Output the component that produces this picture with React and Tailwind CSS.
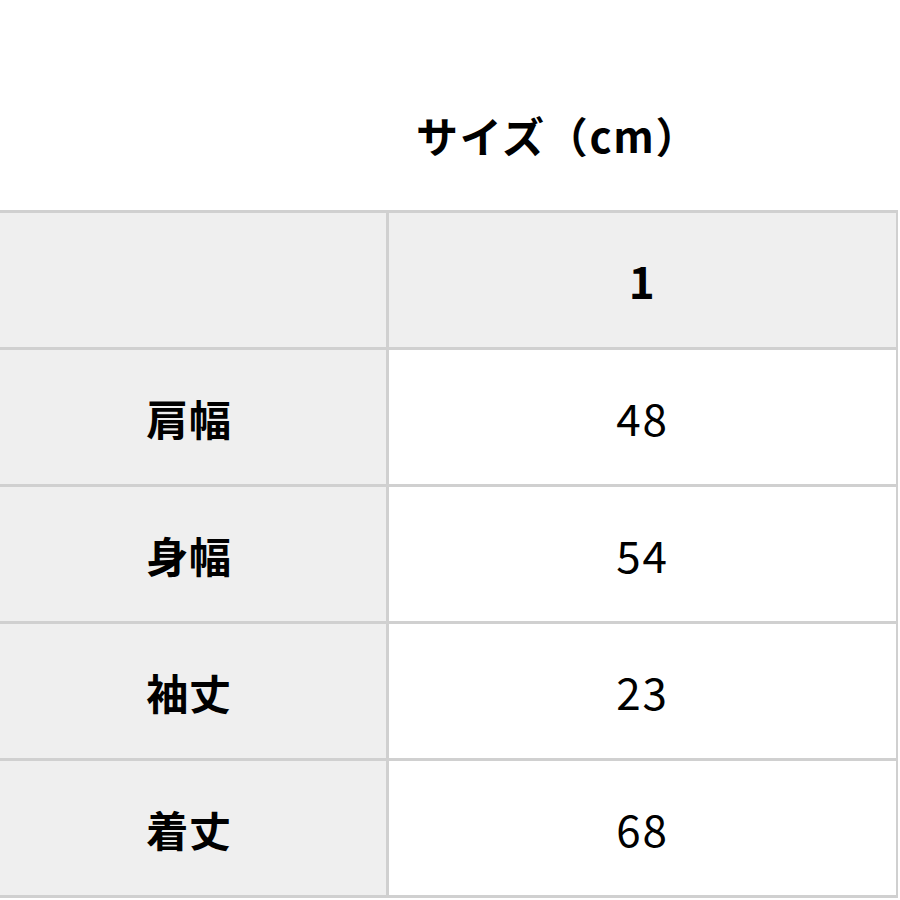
const rows = [
  { label: '', value: '1', head: true },
  { label: '肩幅', value: '48' },
  { label: '身幅', value: '54' },
  { label: '袖丈', value: '23' },
  { label: '着丈', value: '68' },
];

export default function App() {
  return (
    <div
      className="w-[900px] h-[900px] bg-white text-black overflow-hidden"
      style={{ fontFamily: '"Noto Sans CJK JP", "Noto Sans", sans-serif' }}
    >
      <div className="h-[210px] flex items-center pl-[416px] pt-[58px]">
        <h1 className="text-[42px] font-bold tracking-[0.04em]">サイズ（cm）</h1>
      </div>
      <div className="w-[898px] border-t-[3px] border-r-[2px] border-[#d0d0d0]">
        {rows.map((r, i) => (
          <div key={i} className="flex h-[137px] border-b-[3px] border-[#d0d0d0]">
            <div className="w-[386px] bg-[#efefef] flex items-center justify-center text-[42px] font-bold tracking-[0.02em] pr-[8px]">
              {r.label}
            </div>
            <div
              className={`flex-1 border-l-[3px] border-[#d0d0d0] flex items-center justify-center text-[44px] tracking-[0.04em] ${
                r.head ? 'bg-[#efefef] font-bold' : 'bg-white'
              }`}
            >
              {r.value}
            </div>
          </div>
        ))}
      </div>
    </div>
  );
}
